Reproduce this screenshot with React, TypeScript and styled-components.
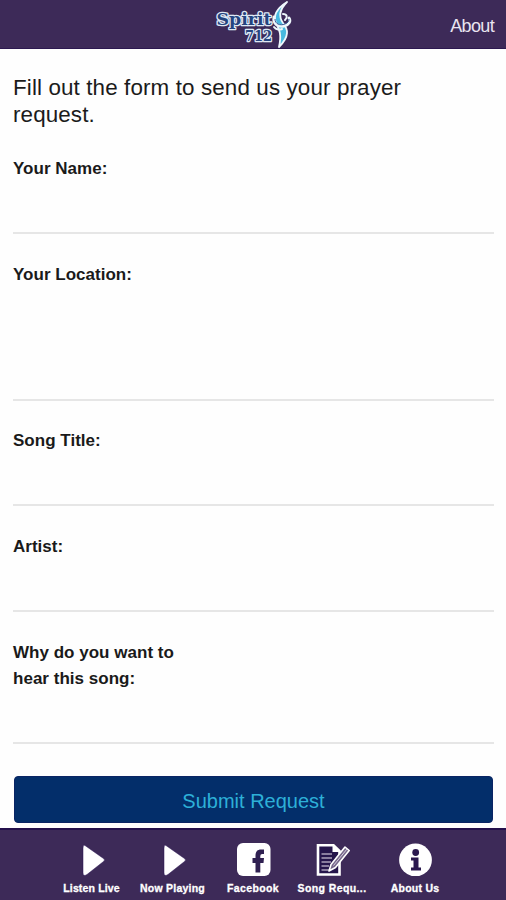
import React from "react";
import styled, { createGlobalStyle } from "styled-components";

const GlobalStyle = createGlobalStyle`
  * { box-sizing: border-box; }
  body {
    margin: 0;
    background: #fefefe;
    font-family: "Liberation Sans", Arial, Helvetica, sans-serif;
  }
`;

const Screen = styled.div`
  width: 100%;
  height: 900px;
  display: flex;
  flex-direction: column;
  overflow: hidden;
`;

const Header = styled.header`
  height: 49px;
  flex: none;
  display: grid;
  grid-template-columns: 1fr 80px 1fr;
  align-items: center;
  padding: 0 12px 0 13px;
  background: #3d2a58;
  border-bottom: 1px solid #2c1850;
`;

const LogoSlot = styled.div`
  grid-column: 2;
  height: 48px;
`;

const HeaderLink = styled.a`
  justify-self: end;
  margin-top: 4px;
  color: #e9e4f0;
  font-size: 18px;
  letter-spacing: -0.65px;
`;

const Form = styled.form`
  flex: 1;
  display: flex;
  flex-direction: column;
  padding: 25px 12px 0 13px;
`;

const Intro = styled.h1`
  margin: 0 0 27px;
  width: 420px;
  font-size: 22.4px;
  font-weight: 400;
  line-height: 27px;
  letter-spacing: 0.12px;
  color: #1b1b1b;
`;

const Field = styled.label<{ $height: number }>`
  display: block;
  flex: none;
  height: ${(p) => p.$height}px;
  margin-bottom: 27px;
  border-bottom: 2px solid #e6e6e6;
`;

const FieldName = styled.span<{ $top: number }>`
  display: block;
  width: 178px;
  padding-top: ${(p) => p.$top}px;
  font-size: 17px;
  font-weight: 700;
  line-height: 26px;
  letter-spacing: 0.02px;
  color: #1a1a1a;
`;

const Submit = styled.button`
  flex: none;
  height: 47px;
  margin: 5px 1px 0;
  padding: 3px 0 0;
  border: 1px solid #0a2464;
  border-radius: 4px;
  background: #032e6a;
  color: #2db0d8;
  font-family: inherit;
  font-size: 20px;
`;

const TabBar = styled.nav`
  height: 72px;
  flex: none;
  display: grid;
  grid-template-columns: repeat(5, 81px);
  justify-content: center;
  background: #3d2a58;
  border-top: 2px solid #24104c;
`;

const Tab = styled.a<{ $nudge: number }>`
  display: flex;
  flex-direction: column;
  align-items: center;
  padding-top: 10px;
  margin-left: ${(p) => p.$nudge}px;
  margin-right: ${(p) => -p.$nudge}px;
  color: #fff;
`;

const TabLabel = styled.span<{ $spacing: number }>`
  margin-top: 5px;
  font-size: 10.5px;
  font-weight: 700;
  line-height: 14px;
  white-space: nowrap;
  letter-spacing: ${(p) => p.$spacing}px;
  -webkit-text-stroke: 0.3px #fff;
`;

const Logo = () => (
  <svg width="80" height="48" viewBox="0 0 80 48">
    <g fontFamily="DejaVu Serif, serif" fontWeight="700" strokeLinejoin="round" paintOrder="stroke" fill="#24447f" stroke="#dfe8f4">
      <text x="2.5" y="25" fontSize="17" textLength="55" lengthAdjust="spacingAndGlyphs" strokeWidth="2.6">Spirit</text>
      <text x="31" y="41" fontSize="14" textLength="27" lengthAdjust="spacingAndGlyphs" strokeWidth="2.6">712</text>
    </g>
    <path d="M73 2C62 9 59 16 62 23C65 29 68 34 65 47C76 36 74 29 69 23C64 16 66 9 73 2Z" fill="#47b9df" stroke="#eef7fc" strokeWidth="1.8" strokeLinejoin="round" />
    <path d="M60 17C59 24 64 27 70 26C75 25 77 21 75 18" fill="none" stroke="#eef7fc" strokeWidth="3" strokeLinecap="round" />
    <path d="M69 14C73 14 74 17 71 20M60 27C62 30 66 30 68 29" fill="none" stroke="#eef7fc" strokeWidth="2" strokeLinecap="round" />
    <path d="M61 19C61 24 66 26 71 24C74 23 75 21 75 19" fill="none" stroke="#365a96" strokeWidth="1" />
  </svg>
);

const PlayIcon = () => (
  <svg width="36" height="36" viewBox="0 0 36 36">
    <path d="M11 5.5L29.5 18.5Q31.5 20 29.5 21.5L13 34.5Q9 37 9 33V8Q9 4 11 5.5Z" fill="#fff" stroke="#291253" strokeWidth=".5" />
  </svg>
);

const FacebookIcon = () => (
  <svg width="36" height="36" viewBox="0 0 36 36">
    <rect x="2" y="3" width="33.5" height="33" rx="6" fill="#fff" />
    <path d="M20.5 32.5V23H17.5V18H20.5V16C20.5 11.5 22.5 9.5 26 9.5H29V14H27.2Q25.3 14 25.3 16V18H29L28.5 23H25.3V32.5Z" fill="#2f2051" />
  </svg>
);

const NoteIcon = () => (
  <svg width="36" height="36" viewBox="0 0 36 36">
    <path d="M4 5.3H19.5L25.5 11V34.5H4Z" fill="#25154b" stroke="#fff" strokeWidth="2.6" />
    <path d="M18.5 4V12H26.5Z" fill="#fff" />
    <path d="M7.5 14H18M7.5 18H18M7.5 22H17M7.5 26H15M7.5 30H15" stroke="#aaa0ba" strokeWidth="1.7" />
    <path d="M15 31L17 24.5L31 7L35.2 10.5L21.5 27.5Z" fill="#77698b" stroke="#fff" strokeWidth="1.6" strokeLinejoin="round" />
    <path d="M19.5 25.5L33 9" stroke="#d6cedf" strokeWidth="1" />
  </svg>
);

const InfoIcon = () => (
  <svg width="36" height="36" viewBox="0 0 36 36">
    <circle cx="18.5" cy="20" r="16.4" fill="#fff" />
    <circle cx="18.7" cy="12.5" r="3.4" fill="#2a184f" />
    <path d="M14 17.5H21.5V27.5H24V30.5H14V27.5H16.5V20.5H14Z" fill="#2a184f" />
  </svg>
);

const fields = [
  { name: "Your Name:", height: 79, top: 1 },
  { name: "Your Location:", height: 140, top: 1 },
  { name: "Song Title:", height: 78, top: 0 },
  { name: "Artist:", height: 79, top: 1 },
  { name: "Why do you want to hear this song:", height: 105, top: 1 },
];

const tabs = [
  { label: "Listen Live", icon: <PlayIcon />, spacing: 0.15, nudge: 0.5 },
  { label: "Now Playing", icon: <PlayIcon />, spacing: 0.23, nudge: 0.5 },
  { label: "Facebook", icon: <FacebookIcon />, spacing: 0.35, nudge: 0 },
  { label: "Song Requ...", icon: <NoteIcon />, spacing: 0.4, nudge: -2 },
  { label: "About Us", icon: <InfoIcon />, spacing: 0.25, nudge: 0 },
];

export default function App() {
  return (
    <Screen>
      <GlobalStyle />
      <Header>
        <LogoSlot><Logo /></LogoSlot>
        <HeaderLink>About</HeaderLink>
      </Header>
      <Form>
        <Intro>Fill out the form to send us your prayer request.</Intro>
        {fields.map((f) => (
          <Field key={f.name} $height={f.height}>
            <FieldName $top={f.top}>{f.name}</FieldName>
          </Field>
        ))}
        <Submit type="button">Submit Request</Submit>
      </Form>
      <TabBar>
        {tabs.map((t) => (
          <Tab key={t.label} $nudge={t.nudge}>
            {t.icon}
            <TabLabel $spacing={t.spacing}>{t.label}</TabLabel>
          </Tab>
        ))}
      </TabBar>
    </Screen>
  );
}
